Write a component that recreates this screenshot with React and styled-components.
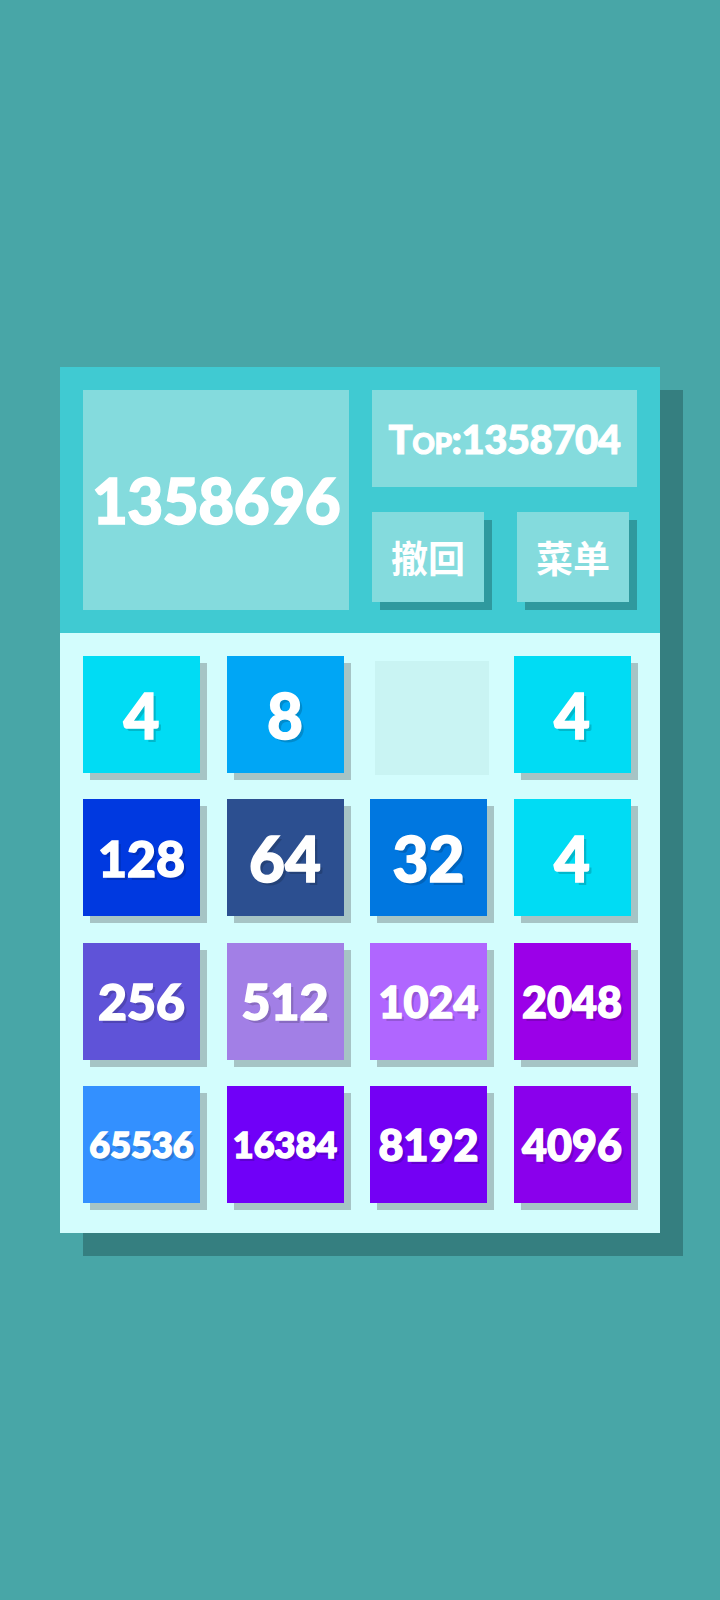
import React from "react";
import styled, { createGlobalStyle } from "styled-components";

const GlobalStyle = createGlobalStyle`
  html, body {
    margin: 0;
    padding: 0;
    background-color: #48a6a7;
  }
  body {
    font-family: "Lato", "Noto Sans CJK SC", sans-serif;
  }
`;

const Page = styled.div`
  min-height: 100vh;
  display: flex;
  align-items: center;
  justify-content: center;
`;

const Panel = styled.div`
  width: 600px;
  display: flex;
  flex-direction: column;
  box-shadow: 23px 23px 0 #357f80;
`;

const Header = styled.div`
  height: 266px;
  box-sizing: border-box;
  padding: 23px;
  background-color: #40cad2;
  display: grid;
  grid-template-columns: 266px 1fr;
  column-gap: 23px;
`;

const ScoreBox = styled.div`
  background-color: #84dbdd;
  display: flex;
  align-items: center;
  justify-content: center;
  color: #ffffff;
  font-family: "Lato", sans-serif;
  font-weight: 900;
  font-size: 62px;
  letter-spacing: -0.5px;
  -webkit-text-stroke: 1.5px #ffffff;
`;

const SideColumn = styled.div`
  display: flex;
  flex-direction: column;
  justify-content: space-between;
`;

const TopBox = styled.div`
  height: 97px;
  background-color: #84dbdd;
  display: flex;
  align-items: center;
  justify-content: center;
  color: #ffffff;
  font-family: "Lato", sans-serif;
  font-weight: 900;
  font-size: 40px;
  font-variant: small-caps;
  letter-spacing: -0.5px;
  -webkit-text-stroke: 1px #ffffff;
`;

const ButtonRow = styled.div`
  display: flex;
  justify-content: space-between;
  padding-right: 8px;
  padding-bottom: 8px;
`;

const MenuButton = styled.button`
  width: 112px;
  height: 90px;
  border: none;
  padding: 0;
  background-color: #84dbdd;
  box-shadow: 8px 8px 0 #2f999e;
  color: #ffffff;
  font-family: "Noto Sans CJK SC", sans-serif;
  font-weight: 700;
  font-size: 37px;
  cursor: pointer;
`;

const Board = styled.div`
  height: 600px;
  box-sizing: border-box;
  padding: 23px 23px 24px;
  background-color: #d3fdfd;
  display: grid;
  grid-template-columns: repeat(4, 1fr);
  grid-template-rows: repeat(4, 1fr);
  gap: 20px 20px;
`;

const Cell = styled.div`
  display: flex;
  align-items: ${(p) => (p.$empty ? "center" : "flex-start")};
  justify-content: ${(p) => (p.$empty ? "center" : "flex-start")};
`;

const Tile = styled.div`
  width: 117px;
  height: 117px;
  background-color: ${(p) => p.$bg};
  box-shadow: 7px 7px 0 #a6c4c5;
  display: flex;
  align-items: center;
  justify-content: center;
  color: #ffffff;
  font-family: "Lato", sans-serif;
  font-weight: 900;
  font-size: ${(p) => p.$size}px;
  letter-spacing: 0;
  -webkit-text-stroke: 1.5px #ffffff;
  text-shadow: 3px 3px 0 rgba(0, 0, 0, 0.16);
`;

const EmptySlot = styled.div`
  width: 114px;
  height: 114px;
  background-color: #c9f4f3;
`;

const colors = {
  4: "#00dcf4",
  8: "#00a6f5",
  32: "#0077e0",
  64: "#2c4f90",
  128: "#0039e0",
  256: "#5f53d8",
  512: "#a27fe6",
  1024: "#b066ff",
  2048: "#9b00e8",
  4096: "#8a00ec",
  8192: "#7400f4",
  16384: "#7000f8",
  65536: "#3390ff",
};

const sizes = { 1: 62, 2: 62, 3: 50, 4: 43, 5: 36 };

const board = [
  [4, 8, 0, 4],
  [128, 64, 32, 4],
  [256, 512, 1024, 2048],
  [65536, 16384, 8192, 4096],
];

const App = () => {
  return (
    <Page>
      <GlobalStyle />
      <Panel>
        <Header>
          <ScoreBox>1358696</ScoreBox>
          <SideColumn>
            <TopBox>Top:1358704</TopBox>
            <ButtonRow>
              <MenuButton>撤回</MenuButton>
              <MenuButton>菜单</MenuButton>
            </ButtonRow>
          </SideColumn>
        </Header>
        <Board>
          {board.flat().map((v, i) =>
            v ? (
              <Cell key={`c` + i}>
                <Tile $bg={colors[v]} $size={sizes[String(v).length]}>
                  {v}
                </Tile>
              </Cell>
            ) : (
              <Cell key={`c` + i} $empty>
                <EmptySlot />
              </Cell>
            )
          )}
        </Board>
      </Panel>
    </Page>
  );
};

export default App;
